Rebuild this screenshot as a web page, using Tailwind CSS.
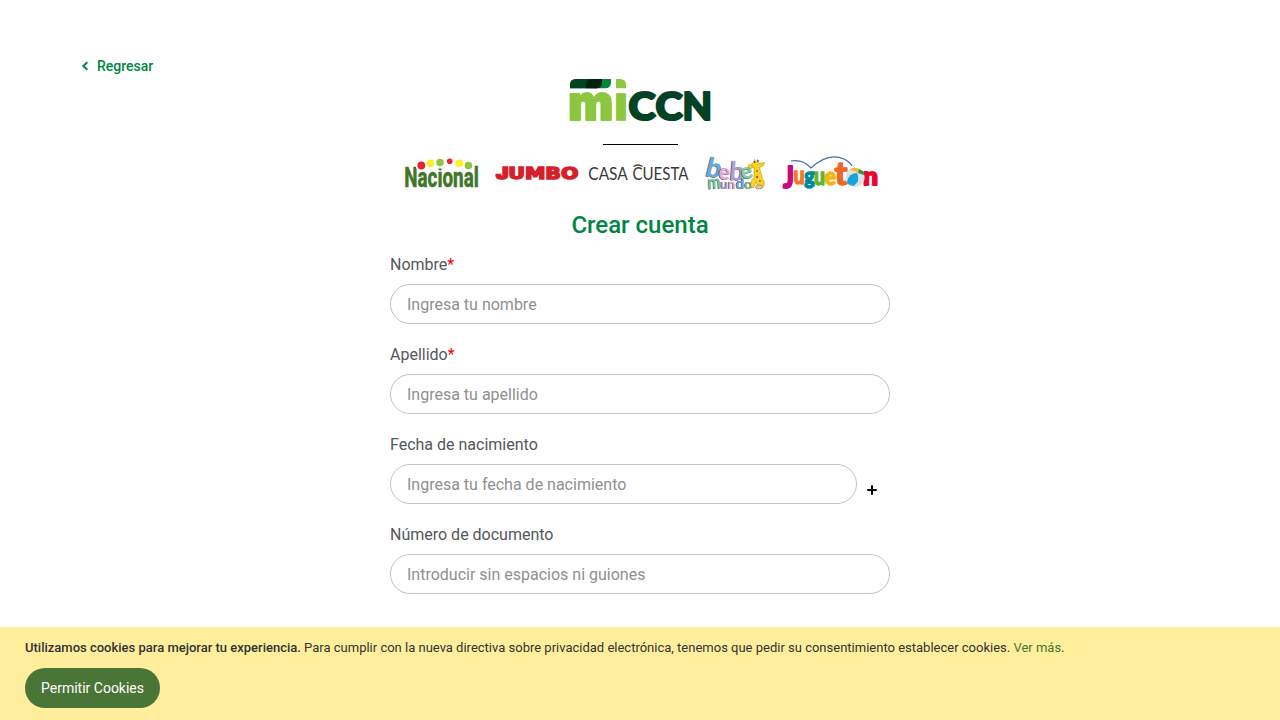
<!DOCTYPE html>
<html lang="es">
<head>
<meta charset="utf-8">
<title>Crear cuenta</title>
<script src="https://cdn.jsdelivr.net/npm/@tailwindcss/browser@4"></script>
</head>
<body class="relative h-[720px] overflow-hidden bg-white font-['Roboto',sans-serif] text-base text-[#54575b]">
<header class="flex h-[79px] items-start pl-[81px] pt-[56px]">
  <a class="flex h-5 items-center text-sm font-medium text-[#008542]">
    <svg class="mr-2 h-[10px] w-2" viewBox="0 0 8 10" fill="none" stroke="#008542" stroke-width="2"><path d="M6.300 1.200 2.300 5l4 3.800"/></svg>Regresar</a>
</header>
<main class="mx-auto flex w-[500px] flex-col">
  <svg class="mx-auto h-[44px] w-[142px] overflow-visible" viewBox="569 79 142 44">
    <path d="M570 88.300v-3.300q0-6 6-6h35v3.300q0 6-6 6z" fill="#04843f"/>
    <path d="M570 88.300v-3.300q0-6 6-6h26v3.300q0 6-6 6z" fill="#034222"/>
    <path d="M586 88.300v-3.300q0-6 6-6h10v3.300q0 6-6 6z" fill="#02200e"/>
    <g font-family="Inter,sans-serif" font-weight="900" stroke-linejoin="round">
      <text x="568.200" y="120" font-size="48.500" fill="#8dc63f" stroke="#8dc63f" stroke-width="2" textLength="45" lengthAdjust="spacingAndGlyphs">m</text>
      <text x="614.500" y="120" font-size="48.500" fill="#8dc63f" stroke="#8dc63f" stroke-width="1.500" textLength="13" lengthAdjust="spacingAndGlyphs">i</text>
    </g>
    <g font-family="Lato,sans-serif" font-weight="900" font-size="37" fill="#034222" stroke="#034222" stroke-width="2.200" stroke-linejoin="round">
      <text x="628.500" y="120" textLength="27" lengthAdjust="spacingAndGlyphs">C</text>
      <text x="655.500" y="120" textLength="27" lengthAdjust="spacingAndGlyphs">C</text>
      <text x="682.500" y="120" textLength="29.500" lengthAdjust="spacingAndGlyphs">N</text>
    </g>
    <path d="M614 78h14v14.300h-14z" fill="#fff"/>
    <path d="M616 79h4q6 0 6 6v3.300h-10z" fill="#8dc63f"/>
  </svg>
  <div class="mx-auto mt-[21px] h-px w-[75px] bg-black"></div>
  <div class="ml-[14px] mt-[10px] flex h-9 w-[476px]">
    <svg class="h-9 w-[76px] shrink-0 overflow-visible" viewBox="404 155 76 36">
      <text x="404.300" y="186.700" font-family="Roboto,sans-serif" font-weight="800" font-size="28" fill="#437629" stroke="#437629" stroke-width=".4" textLength="74.500" lengthAdjust="spacingAndGlyphs">Nacional</text>
      <path d="M416 155h53v13.500h-53z" fill="#fff"/>
      <circle cx="421.300" cy="165.500" r="3.900" fill="#eb2229"/><circle cx="430.500" cy="163.300" r="3.800" fill="#fff01f"/><circle cx="440" cy="162.500" r="3.800" fill="#8cc63f"/><circle cx="449.700" cy="161.300" r="2.800" fill="#eb2229"/><circle cx="459.300" cy="163.300" r="3.800" fill="#fff01f"/><circle cx="468.400" cy="165.500" r="3.800" fill="#8cc63f"/>
    </svg>
    <svg class="ml-[14px] h-9 w-[86px] shrink-0 overflow-visible" viewBox="494 155 86 36">
      <text x="496" y="178.700" font-family="DejaVu Sans,sans-serif" font-weight="700" font-size="16" fill="#d71f2b" stroke="#d71f2b" stroke-width="1.500" textLength="82.500" lengthAdjust="spacingAndGlyphs"><tspan font-family="Inter" font-weight="900">J</tspan>UMBO</text>
    </svg>
    <svg class="ml-[8px] h-9 w-[102px] shrink-0 overflow-visible" viewBox="588 155 102 36">
      <g font-family="Lato,sans-serif" font-size="16.500" fill="#373937"><text x="588.300" y="180" textLength="39.500" lengthAdjust="spacingAndGlyphs">CASA</text><text x="632.500" y="180" textLength="56" lengthAdjust="spacingAndGlyphs">CUESTA</text></g>
      <path d="M633.500 166.500q4.500-3 9 0" fill="none" stroke="#373937" stroke-width="1.300"/>
    </svg>
    <svg class="ml-[14px] h-9 w-[64px] shrink-0 overflow-visible" viewBox="704 155 64 36">
      <g font-family="Lato,sans-serif" font-weight="700" class="[text-shadow:-0.7px_0.4px_0_#3d4850]">
        <text font-size="27" fill="#6aa9dc" transform="translate(704.500 176) rotate(8) skewX(-6)">b</text>
        <text font-size="22" fill="#eba6d3" transform="translate(718 179) rotate(5)">e</text>
        <text font-size="26" fill="#b29fd9" transform="translate(729 180) rotate(2) skewX(-3)">b</text>
        <text font-size="22" fill="#89cd9b" transform="translate(743 180) rotate(-18)">e</text>
        <text font-size="19" fill="#70c692" transform="translate(708 189) rotate(-4)" textLength="13" lengthAdjust="spacingAndGlyphs">m</text>
        <text font-size="13" fill="#b1a3d6" x="720.500" y="189">u</text><text font-size="13" fill="#e6acd2" x="728" y="189">n</text><text font-size="15" fill="#6aa9dc" x="736" y="189">d</text><text font-size="14" fill="#82c995" x="744.500" y="189">o</text>
      </g>
      <g stroke="#75601a" stroke-width=".35"><path d="m753.500 163-5 2q-1 3 1.500 3.500l4-1 0 10q-4 3-3 10h3l2-6 2 6h5q3-5-.500-9l-3-11 4-2 1-3-6 1-1-4-1 3-2-3z" fill="#fdd31f"/></g>
      <path d="m754 161 1 2m3-3 0 2" stroke="#453719"/>
      <g fill="#a66b13"><circle cx="752" cy="166" r=".7"/><circle cx="757" cy="171" r="1"/><circle cx="757" cy="177" r="1.200"/><circle cx="760" cy="181" r="1.100"/></g>
      <ellipse cx="759" cy="187" rx="3.500" ry="2" fill="#e7cf8b" stroke="#68746b" stroke-width=".6"/>
    </svg>
    <svg class="ml-[12px] h-9 w-[100px] shrink-0 overflow-visible" viewBox="780 155 100 36">
      <path d="M791 161q12-2 20 7 17-16 33-9 6 3 8 7" fill="none" stroke="#406eae" stroke-width="1.150"/>
      <g font-family="Lato,sans-serif" font-weight="900" stroke-linejoin="round" stroke-width="1.300">
        <text x="783" y="187.500" font-size="30" fill="#cb087c" stroke="#cb087c" stroke-width="1.800" textLength="11" lengthAdjust="spacingAndGlyphs">J</text>
        <text x="793.500" y="184" font-size="24" fill="#f17a21" stroke="#f17a21" textLength="11" lengthAdjust="spacingAndGlyphs">u</text>
        <text x="804.300" y="183.500" font-size="23" fill="#008b9c" stroke="#008b9c" textLength="10.500" lengthAdjust="spacingAndGlyphs">g</text>
        <text x="814" y="184.500" font-size="24" fill="#64b32e" stroke="#64b32e" textLength="11" lengthAdjust="spacingAndGlyphs">u</text>
        <text x="824.500" y="184.500" font-size="24" fill="#f6b50b" stroke="#f6b50b" textLength="11.500" lengthAdjust="spacingAndGlyphs">e</text>
        <text x="834.500" y="185" font-size="33" fill="#ed6725" stroke="#ed6725" textLength="13" lengthAdjust="spacingAndGlyphs">t</text>
        <text x="863" y="184.500" font-size="24" fill="#e6082f" stroke="#e6082f" stroke-width="1.800" textLength="15" lengthAdjust="spacingAndGlyphs">n</text>
      </g>
      <circle cx="855" cy="177.500" r="9.700" fill="#e0e2e1"/>
      <path d="M847 183q1-10 10-10 4 9-4 13-4-1-6-3z" fill="#18a3db"/><path d="M849 170q5-4 10-1l-1 4q-7-4-9-3z" fill="#f5ba28"/><path d="M859 169q6 2 5 6l-6-2z" fill="#279649"/>
    </svg>
  </div>
  <h1 class="mt-[18px] text-center text-2xl font-medium text-[#008542]">Crear cuenta</h1>
  <form class="mt-[11px] flex flex-col gap-[18px]">
    <div class="h-[72px]"><label class="block h-8 pt-px leading-6">Nombre<span class="text-[#ff0000]">*</span></label>
      <input class="block h-10 w-full rounded-full border border-[#c2c2c2] px-4 placeholder:text-[#8f8f8f]" placeholder="Ingresa tu nombre"></div>
    <div class="h-[72px]"><label class="block h-8 pt-px leading-6">Apellido<span class="text-[#ff0000]">*</span></label>
      <input class="block h-10 w-full rounded-full border border-[#c2c2c2] px-4 placeholder:text-[#8f8f8f]" placeholder="Ingresa tu apellido"></div>
    <div class="h-[72px]"><label class="block h-8 pt-px leading-6">Fecha de nacimiento</label>
      <div class="flex items-center"><input class="block h-10 w-[467px] rounded-full border border-[#c2c2c2] px-4 placeholder:text-[#8f8f8f]" placeholder="Ingresa tu fecha de nacimiento">
      <svg class="ml-[10px] mt-3 h-[10px] w-[10px]" viewBox="0 0 10 10"><path d="M1 5h8M5 1v8" stroke="#000" stroke-width="2" stroke-linecap="round"/></svg></div></div>
    <div class="h-[72px]"><label class="block h-8 pt-px leading-6">Número de documento</label>
      <input class="block h-10 w-full rounded-full border border-[#c2c2c2] px-4 placeholder:text-[#8f8f8f]" placeholder="Introducir sin espacios ni guiones"></div>
  </form>
</main>
<aside class="fixed inset-x-0 bottom-0 h-[93px] bg-[#ffee9c] px-[25px] pt-[11px] text-[13px] text-[#333333]">
  <p class="leading-5"><strong class="font-medium">Utilizamos cookies para mejorar tu experiencia.</strong> Para cumplir con la nueva directiva sobre privacidad electrónica, tenemos que pedir su consentimiento establecer cookies. <a class="text-[#497536]">Ver más</a>.</p>
  <button class="mt-[10px] h-10 w-[135px] rounded-full bg-[#497536] text-sm text-white">Permitir Cookies</button>
</aside>
</body>
</html>
